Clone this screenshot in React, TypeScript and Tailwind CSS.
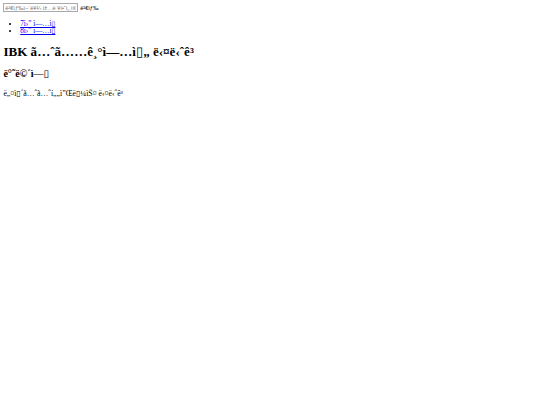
import React from "react";

export default function App() {
  return (
    <div className="[zoom:0.421875] m-[8px] font-['Liberation_Serif','DejaVu_Serif',serif] text-[16px] leading-[normal] text-black">
      <form className="flex items-center" onSubmit={(e) => e.preventDefault()}>
        <input
          type="text"
          placeholder="ê²€ìƒ‰ì–´ë¥¼ ìž…ë ¥í•˜ì„¸ìš”"
          className="w-[177px] h-[21px] border border-[#a9a9a9] px-[2px] py-[1px] text-[13.333px] font-['Liberation_Sans',sans-serif] placeholder:text-[#757575] outline-none"
        />
        <button
          type="submit"
          className="ml-[5px] h-[21px] text-[13.333px] font-['Liberation_Sans',sans-serif] text-black bg-transparent"
        >
          ê²€ìƒ‰
        </button>
      </form>
      <ul className="list-disc pl-[40px] mt-[20px] mb-[16px] text-[17px] leading-[18.4px]">
        <li>
          <a href="#" className="text-[#0000ee] underline">
            7ì›” ì—…ì▯
          </a>
        </li>
        <li>
          <a href="#" className="text-[#0000ee] underline">
            8ì›” ì—…ì▯
          </a>
        </li>
      </ul>
      <h1 className="text-[31px] font-bold mt-[18px] mb-[16px]">
        IBK ã…ˆã……ê¸°ì—…ì▯„ ë‹¤ë‹ˆê³
      </h1>
      <h2 className="text-[24px] font-bold mt-[16px] mb-[19.92px]">ë°˜ë©´ì—▯</h2>
      <p className="mt-[27px] mb-[16px] text-[18.5px] leading-[18.4px]">
        ë„¤ì▯´ã…ˆã…ˆí„„ì”Œë▯¼ìŠ¤ ë‹¤ë‹ˆê³
      </p>
    </div>
  );
}
